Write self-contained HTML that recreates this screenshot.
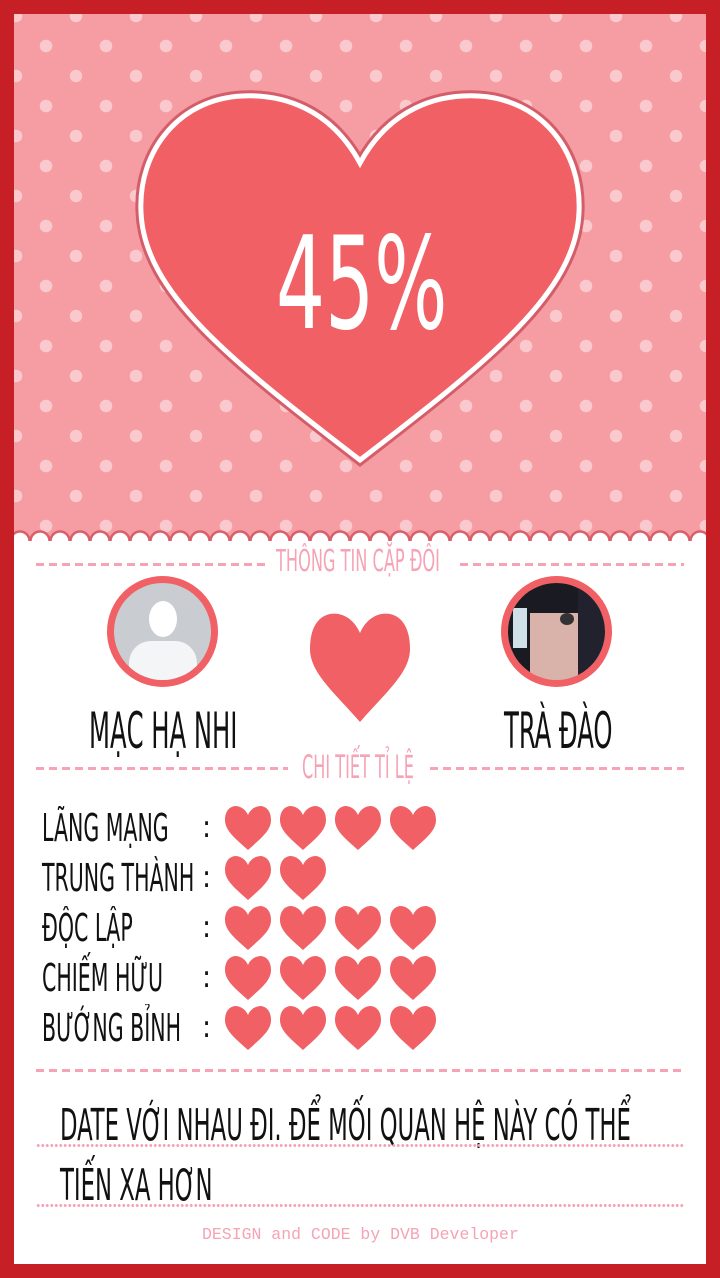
<!DOCTYPE html>
<html><head><meta charset="utf-8"><style>
*{margin:0;padding:0;box-sizing:border-box}
body{width:720px;height:1278px;background:#c61f26;position:relative;overflow:hidden;font-family:"Liberation Sans Narrow","DejaVu Sans Condensed","Liberation Sans",sans-serif}
#card{position:absolute;left:14px;top:14px;width:692px;height:1250px;background:#fff;overflow:hidden}
#top{position:absolute;left:0;top:0;width:692px;height:527px;background-color:#f59da2;
background-image:radial-gradient(circle,#fac9ce 6px,transparent 6.5px),radial-gradient(circle,#fac9ce 6px,transparent 6.5px);
background-size:60px 60px,60px 60px;background-position:-28px -28px,2px 2px}
#scal{position:absolute;left:0;top:515px;width:692px;height:12px;
background-image:radial-gradient(circle at 10px 12px,#fff 8px,#d9606a 8.5px,#d9606a 10.5px,transparent 11px);background-size:20px 12px;background-position:-4px 0}
.t{position:absolute;white-space:nowrap;display:block;transform-origin:left top}
.dash{position:absolute;height:3px;background:repeating-linear-gradient(90deg,#f5a3b5 0 8px,transparent 8px 13px)}
.dot{position:absolute;height:3px;left:22px;width:648px;background:radial-gradient(circle,#f5a3b5 1.4px,transparent 1.6px);background-size:4.5px 3px}
.lbl{position:absolute;left:28px;font-size:38px;color:#111;text-transform:uppercase;transform:scaleX(.6);transform-origin:left top;white-space:nowrap}
.col{position:absolute;left:188px;font-size:30px;color:#111}
</style></head><body>
<div id="card">
<div id="top"></div>
<div id="scal"></div>
<svg style="position:absolute;left:0;top:0" width="692" height="530">
<path transform="translate(-14,-14)" d="M360,163 C330,108 282,94 242,96 C180,99 138,150 141,212 C144,292 230,360 360,460 C490,360 576,292 579,212 C582,150 540,99 478,96 C438,94 390,108 360,163Z" fill="#f06065" stroke="#d45d69" stroke-width="11"/>
<path transform="translate(-14,-14)" d="M360,163 C330,108 282,94 242,96 C180,99 138,150 141,212 C144,292 230,360 360,460 C490,360 576,292 579,212 C582,150 540,99 478,96 C438,94 390,108 360,163Z" fill="#f06065" stroke="#fff" stroke-width="5"/>
</svg>
<div class="t" style="left:262px;top:196px;font-size:128px;color:#fff;transform:scaleX(.67)">45%</div>

<div class="dash" style="left:22px;top:549px;width:232px"></div>
<div class="dash" style="left:446px;top:549px;width:224px"></div>
<div class="t" style="left:262px;top:530px;font-size:30px;color:#f5a3b5;transform:scaleX(.6)">THÔNG TIN CẶP ĐÔI</div>

<div style="position:absolute;left:93px;top:562px;width:111px;height:111px;border-radius:50%;background:#f06065;padding:7px">
<div style="width:97px;height:97px;border-radius:50%;background:#c9ccd0;position:relative;overflow:hidden">
<div style="position:absolute;left:35px;top:18px;width:28px;height:36px;border-radius:50%;background:#fff"></div>
<div style="position:absolute;left:15px;top:58px;width:68px;height:50px;border-radius:22px 22px 0 0;background:#f4f5f6"></div>
</div></div>
<div style="position:absolute;left:487px;top:562px;width:111px;height:111px;border-radius:50%;background:#f06065;padding:7px">
<div style="width:97px;height:97px;border-radius:50%;background:#d9b2aa;position:relative;overflow:hidden">
<div style="position:absolute;left:0;top:0;width:97px;height:30px;background:#1a1a22"></div>
<div style="position:absolute;left:0;top:0;width:22px;height:97px;background:#1a1a22"></div>
<div style="position:absolute;left:70px;top:0;width:27px;height:97px;background:#22222e"></div>
<div style="position:absolute;left:5px;top:25px;width:14px;height:40px;background:#cfe0e8"></div>
<div style="position:absolute;left:52px;top:30px;width:14px;height:12px;border-radius:50%;background:#333"></div>
</div></div>
<svg style="position:absolute;left:296px;top:597px" width="100" height="112" viewBox="0 0 100 112"><path d="M50,22 C43,6 30,1 20,3 C6,6 0,20 0,38 C0,62 25,82 50,111 C75,82 100,62 100,38 C100,20 94,6 80,3 C70,1 57,6 50,22Z" fill="#f06065"/></svg>
<div class="t" style="left:75px;top:688px;font-size:50px;color:#111;transform:scaleX(.54)">MẠC HẠ NHI</div>
<div class="t" style="left:490px;top:688px;font-size:50px;color:#111;transform:scaleX(.54)">TRÀ ĐÀO</div>

<div class="dash" style="left:22px;top:753px;width:252px"></div>
<div class="dash" style="left:416px;top:753px;width:254px"></div>
<div class="t" style="left:288px;top:734px;font-size:32px;color:#f5a3b5;transform:scaleX(.56)">CHI TIẾT TỈ LỆ</div>

<div class="lbl" style="top:792px">LÃNG MẠNG</div><div class="col" style="top:796px">:</div>
<div class="lbl" style="top:842px">TRUNG THÀNH</div><div class="col" style="top:846px">:</div>
<div class="lbl" style="top:892px">ĐỘC LẬP</div><div class="col" style="top:896px">:</div>
<div class="lbl" style="top:942px">CHIẾM HỮU</div><div class="col" style="top:946px">:</div>
<div class="lbl" style="top:992px">BƯỚNG BỈNH</div><div class="col" style="top:996px">:</div>

<svg style="position:absolute;left:0;top:0" width="692" height="1250">
<defs><path id="hh" d="M23,9 C20,2 14,0 10,0 C3,1 0,7 0,14 C0,25 11,33 23,44 C35,33 46,25 46,14 C46,7 43,1 36,0 C32,0 26,2 23,9Z" fill="#f06065"/></defs>
<g transform="translate(211,792)"><use href="#hh"/><use href="#hh" x="55"/><use href="#hh" x="110"/><use href="#hh" x="165"/></g>
<g transform="translate(211,842)"><use href="#hh"/><use href="#hh" x="55"/></g>
<g transform="translate(211,892)"><use href="#hh"/><use href="#hh" x="55"/><use href="#hh" x="110"/><use href="#hh" x="165"/></g>
<g transform="translate(211,942)"><use href="#hh"/><use href="#hh" x="55"/><use href="#hh" x="110"/><use href="#hh" x="165"/></g>
<g transform="translate(211,992)"><use href="#hh"/><use href="#hh" x="55"/><use href="#hh" x="110"/><use href="#hh" x="165"/></g>
</svg>

<div class="dash" style="left:22px;top:1055px;width:648px"></div>
<div class="t" style="left:46px;top:1086px;font-size:44px;color:#111;transform:scaleX(.575)">DATE VỚI NHAU ĐI. ĐỂ MỐI QUAN HỆ NÀY CÓ THỂ</div>
<div class="dot" style="top:1130px"></div>
<div class="t" style="left:46px;top:1146px;font-size:44px;color:#111;transform:scaleX(.575)">TIẾN XA HƠN</div>
<div class="dot" style="top:1190px"></div>
<div class="t" style="left:188px;top:1211px;font-size:16.5px;color:#f5a3b5;font-family:'Liberation Mono',monospace">DESIGN and CODE by DVB Developer</div>
</div>
</body></html>
